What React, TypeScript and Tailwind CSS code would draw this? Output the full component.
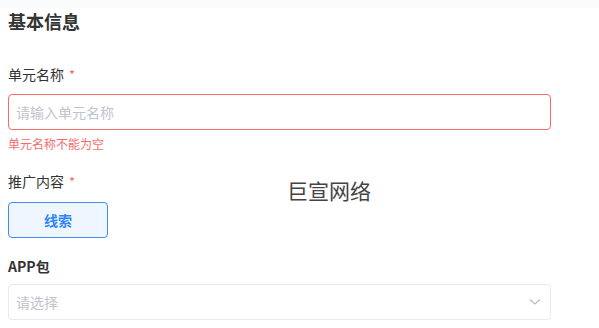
import React from "react";

export default function App() {
  return (
    <div
      className="relative w-[599px] h-[328px] bg-white overflow-hidden text-[#333]"
      style={{ fontFamily: '"Noto Sans CJK SC", "Noto Sans", sans-serif' }}
    >
      <div className="h-[8px] bg-[#fafbfc]" />
      <div className="px-2 w-[559px]">
        <h2 className="mt-[1px] text-[18px] leading-[24px] font-bold text-[#333]">基本信息</h2>

        <div className="mt-[30px] text-[14px] leading-[22px] text-[#333] flex items-start">
          <span>单元名称</span>
          <span className="ml-[5px] mt-[4px] text-[13px] leading-[16px] text-[#f56c6c]">*</span>
        </div>
        <div className="mt-[9px] h-[36px] w-[543px] border border-[#f56c6c] rounded-[4px] flex items-center pl-[7px] text-[14px] text-[#c0c4cc]">
          请输入单元名称
        </div>
        <div className="mt-[4px] text-[12px] leading-[20px] text-[#f56c6c]">单元名称不能为空</div>

        <div className="mt-[16px] text-[14px] leading-[22px] text-[#333] flex items-start">
          <span>推广内容</span>
          <span className="ml-[5px] mt-[4px] text-[13px] leading-[16px] text-[#f56c6c]">*</span>
        </div>
        <div className="mt-[10px] h-[36px] w-[100px] border border-[#3a8ef6] bg-[#eff6ff] rounded-[4px] flex items-center justify-center text-[14px] font-bold text-[#2f86f6]">
          线索
        </div>

        <div className="mt-[17px] text-[14px] leading-[22px] font-bold text-[#333]">APP包</div>
        <div className="mt-[7px] h-[36px] w-[543px] border border-[#e8eaef] rounded-[4px] flex items-center justify-between pl-[7px] pr-[9px] text-[14px] text-[#c0c4cc]">
          <span>请选择</span>
          <svg width="12" height="8" viewBox="0 0 12 8" fill="none">
            <path d="M1 1.5 L6 6 L11 1.5" stroke="#b8bcc4" strokeWidth="1.2" />
          </svg>
        </div>
      </div>

      <div className="absolute left-[287px] top-[176px] text-[21px] leading-[28px] text-[#444]">巨宣网络</div>
    </div>
  );
}
